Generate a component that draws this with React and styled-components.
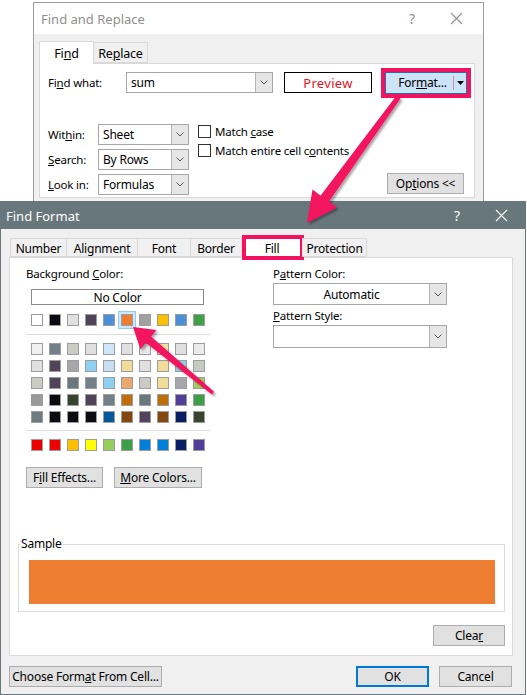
import React from 'react';
import styled, { createGlobalStyle, css } from 'styled-components';

const Global = createGlobalStyle`
  *, *::before, *::after { box-sizing: border-box; }
  html, body { margin: 0; padding: 0; background: #fff; }
  body {
    font-family: "Noto Sans", "Liberation Sans", sans-serif;
    font-size: 11.5px;
    letter-spacing: -0.2px;
    color: #000;
  }
`;

const PINK = '#f3125f';

const Desktop = styled.div`
  position: relative;
  width: 527px;
  height: 695px;
  overflow: hidden;
  background: #fff;
`;

/* ---------- windows ---------- */
const Window = styled.div`
  position: absolute;
  left: ${p => p.$x}px;
  top: ${p => p.$y}px;
  width: ${p => p.$w}px;
  height: ${p => p.$h}px;
  background: #f0f0f0;
  border: 1px solid ${p => p.$border};
  display: flex;
  flex-direction: column;
`;

const TitleBar = styled.div`
  height: ${p => p.$h}px;
  flex: none;
  display: flex;
  align-items: center;
  padding-left: ${p => p.$pad}px;
  background: ${p => (p.$active ? '#68777b' : '#fff')};
  color: ${p => (p.$active ? '#fff' : '#8f8f8f')};
  font-size: 13px;
  letter-spacing: 0;
`;

const TitleText = styled.div`
  flex: 1;
`;

const TitleBtn = styled.div`
  width: ${p => p.$w}px;
  display: flex;
  justify-content: center;
  align-items: center;
  font-size: 14px;
`;

const CloseIcon = ({ color }) => (
  <svg width="13" height="13" viewBox="0 0 13 13">
    <path d="M1 1 L12 12 M12 1 L1 12" stroke={color} strokeWidth="1.1" fill="none" />
  </svg>
);

/* ---------- tabs ---------- */
const TabStrip = styled.div`
  display: flex;
  align-items: flex-end;
  height: ${p => p.$h}px;
  padding-left: ${p => p.$indent || 0}px;
  position: relative;
  z-index: 1;
`;

const Tab = styled.div`
  position: relative;
  width: ${p => p.$w}px;
  height: ${p => (p.$active ? p.$h + 2 : p.$h)}px;
  margin-bottom: ${p => (p.$active ? -1 : 0)}px;
  display: flex;
  align-items: center;
  justify-content: center;
  background: ${p => (p.$active ? '#fff' : '#f0f0f0')};
  border: 1px solid #d9d9d9;
  border-bottom: ${p => (p.$active ? 'none' : '1px solid #d9d9d9')};
  margin-left: -1px;
  font-size: ${p => p.$fs || 12}px;
  padding-top: ${p => (p.$active ? 0 : 1)}px;
`;

const TabHighlight = styled.div`
  position: absolute;
  left: 0px;
  top: -3px;
  right: -2px;
  bottom: -2px;
  border: 4px solid ${PINK};
  pointer-events: none;
`;

const Panel = styled.div`
  background: #fff;
  border: 1px solid #d9d9d9;
  width: ${p => p.$w}px;
  height: ${p => p.$h}px;
  display: flex;
  flex-direction: column;
`;

/* ---------- controls ---------- */
const U = styled.span`
  text-decoration: underline;
  text-underline-offset: 1px;
`;

const Label = styled.div`
  width: ${p => (p.$w ? `${p.$w}px` : 'auto')};
  line-height: 16px;
  white-space: nowrap;
`;

const ComboBox = styled.div`
  width: ${p => p.$w}px;
  height: ${p => p.$h || 21}px;
  display: flex;
  background: #fff;
  border: 1px solid #a6a6a6;
`;

const ComboText = styled.div`
  flex: 1;
  display: flex;
  align-items: center;
  justify-content: ${p => (p.$center ? 'center' : 'flex-start')};
  padding-left: ${p => (p.$center ? 0 : 4)}px;
  font-size: 12px;
`;

const ComboDrop = styled.div`
  width: 17px;
  display: flex;
  align-items: center;
  justify-content: center;
  background: #e6e6e6;
  border-left: 1px solid #b4b4b4;
`;

const Chevron = () => (
  <svg width="8" height="5" viewBox="0 0 8 5">
    <polyline points="0.5,0.5 4,4 7.5,0.5" stroke="#555" strokeWidth="1" fill="none" />
  </svg>
);

const Combo = ({ w, h, center, children }) => (
  <ComboBox $w={w} $h={h}>
    <ComboText $center={center}>{children}</ComboText>
    <ComboDrop>
      <Chevron />
    </ComboDrop>
  </ComboBox>
);

const Button = styled.div`
  width: ${p => p.$w}px;
  height: ${p => p.$h || 21}px;
  display: flex;
  align-items: center;
  justify-content: center;
  background: #e1e1e1;
  border: ${p => (p.$default ? '2px solid #0078d7' : '1px solid #adadad')};
  font-size: 12px;
  white-space: nowrap;
`;

const PreviewBox = styled.div`
  width: 88px;
  height: 21px;
  border: 1px solid #000;
  display: flex;
  align-items: center;
  justify-content: center;
  color: #e8121e;
  font-size: 13px;
  letter-spacing: 0.3px;
`;

const FormatFrame = styled.div`
  width: 90px;
  height: 30px;
  border: 4px solid ${PINK};
  display: flex;
`;

const FormatBtn = styled.div`
  flex: 1;
  display: flex;
  align-items: center;
  background: #cce4f7;
  border: 1px solid #2a6aa8;
  font-size: 12px;
`;

const FormatLabel = styled.div`
  flex: 1;
  text-align: center;
  padding-left: 6px;
`;

const FormatSplit = styled.div`
  width: 1px;
  height: 14px;
  background: #d98aa0;
`;

const FormatArrow = styled.div`
  width: 12px;
  display: flex;
  justify-content: center;
`;

const CheckRow = styled.div`
  display: flex;
  align-items: center;
  gap: 4px;
  height: 14px;
`;

const CheckBox = styled.div`
  width: 13px;
  height: 13px;
  border: 1px solid #333;
  background: #fff;
`;

/* ---------- back dialog layout ---------- */
const BackBody = styled.div`
  padding: 7px 0 0 5px;
`;

const BackPanelInner = styled.div`
  padding: 8px 0 0 8px;
  display: flex;
  flex-direction: column;
`;

const FindRow = styled.div`
  display: flex;
  align-items: center;
  height: 21px;
`;

const Gap = styled.div`
  width: ${p => p.$w}px;
  flex: none;
`;

const LowerSection = styled.div`
  display: flex;
  margin-top: 31px;
`;

const SelectGrid = styled.div`
  display: grid;
  grid-template-columns: 50px 91px;
  row-gap: 4px;
  align-items: center;
`;

const CheckColumn = styled.div`
  flex: 1;
  margin-left: 9px;
  margin-right: 10px;
  display: flex;
  flex-direction: column;
  gap: 5px;
`;

const OptionsWrap = styled.div`
  display: flex;
  justify-content: flex-end;
  margin-top: 11px;
`;

/* ---------- front dialog layout ---------- */
const FrontBody = styled.div`
  flex: 1;
  padding: 8px 13px 0 8px;
  display: flex;
  flex-direction: column;
`;

const FillPanelInner = styled.div`
  flex: 1;
  padding: 8px 7px 9px 8px;
  display: flex;
  flex-direction: column;
`;

const Columns = styled.div`
  display: grid;
  grid-template-columns: 247px 174px;
  padding-left: 8px;
`;

const Col = styled.div`
  display: flex;
  flex-direction: column;
`;

const NoColor = styled.div`
  width: 173px;
  height: 16px;
  margin: 7px 0 0 5px;
  border: 1px solid #8a8a8a;
  display: flex;
  align-items: center;
  justify-content: center;
  font-size: 12px;
`;

const SwatchGrid = styled.div`
  display: grid;
  grid-template-columns: repeat(10, 12px);
  column-gap: 6px;
  row-gap: 5px;
  margin-left: 5px;
  margin-top: ${p => p.$mt}px;
`;

const Swatch = styled.div`
  width: 12px;
  height: 12px;
  border: 1px solid #9d9d9d;
  background: ${p => p.$c};
  ${p =>
    p.$selected &&
    css`
      box-shadow: 0 0 0 2px #cde8fa, 0 0 0 3px #8fcdf1;
    `}
`;

const Separator = styled.div`
  width: 184px;
  height: 1px;
  background: #dcdcdc;
  margin-top: ${p => p.$mt}px;
`;

const ButtonRow = styled.div`
  display: flex;
  gap: 11px;
  margin-top: 16px;
`;

const RightLabel = styled(Label)`
  margin-top: ${p => p.$mt || 0}px;
`;

const RightCombo = styled.div`
  margin-top: ${p => p.$mt || 0}px;
`;

const SampleGroup = styled.fieldset`
  margin: auto 0 0 0;
  padding: 0 9px 7px 10px;
  border: 1px solid #dcdcdc;
  min-width: 0;
`;

const SampleLegend = styled.legend`
  padding: 0 1px;
  margin-left: -9px;
  line-height: 14px;
  font-size: 12px;
`;

const SampleFill = styled.div`
  height: 44px;
  margin-top: 9px;
  background: #ed7d31;
`;

const ClearRow = styled.div`
  display: flex;
  justify-content: flex-end;
  margin-top: 13px;
`;

const BottomRow = styled.div`
  display: flex;
  align-items: center;
  margin-top: 10px;
`;

const Spacer = styled.div`
  flex: 1;
`;

/* ---------- arrows overlay ---------- */
const Overlay = styled.svg`
  position: absolute;
  left: 0;
  top: 0;
  pointer-events: none;
`;

const themeRow = ['#ffffff', '#0b0b10', '#e0e0e0', '#4f4459', '#4a8fd8', '#ed7d31', '#a0a0a0', '#ffc000', '#4a8fd8', '#3f9f45'];
const grid = [
  ['#f0f0f0', '#738089', '#c9cbc4', '#e0e0e0', '#cfe6f8', '#e0e0e0', '#e8e8e8', '#f2e2a2', '#e0e0e0', '#ebebeb'],
  ['#e0e0e0', '#4f4459', '#a7a7ab', '#8dd0f2', '#c8def3', '#f1dc9a', '#e0e0e0', '#f1dc9a', '#8dd0f2', '#c8cac4'],
  ['#c9cbc4', '#4f4459', '#6a777c', '#738089', '#8dd0f2', '#eba86e', '#c9cbc4', '#f1dc9a', '#a7a7ab', '#a0d060'],
  ['#9a9a9a', '#0b0b10', '#3b4230', '#4f4459', '#738089', '#c06d0c', '#6a777c', '#c06d0c', '#4f3f99', '#3c9e45'],
  ['#6e7b80', '#0b0b10', '#0b0b10', '#0b0b10', '#05589a', '#854710', '#4f4459', '#854710', '#0a1f62', '#3b4230'],
];
const standardRow = ['#ec0000', '#ec0000', '#ffc000', '#ffff00', '#97cd5b', '#3c9e45', '#0080d8', '#0080d8', '#0a1f62', '#4f3f99'];

const frontTabs = [
  { label: 'Number', w: 57 },
  { label: 'Alignment', w: 72 },
  { label: 'Font', w: 54 },
  { label: 'Border', w: 52 },
  { label: 'Fill', w: 62, active: true },
  { label: 'Protection', w: 65 },
];

export default function App() {
  return (
    <Desktop>
      <Global />

      {/* Find and Replace (background window) */}
      <Window $x={33} $y={2} $w={451} $h={240} $border="#9c9c9c">
        <TitleBar $h={31} $pad={7}>
          <TitleText>Find and Replace</TitleText>
          <TitleBtn $w={36}>?</TitleBtn>
          <TitleBtn $w={52}>
            <CloseIcon color="#8f8f8f" />
          </TitleBtn>
          <Gap $w={1} />
        </TitleBar>
        <BackBody>
          <TabStrip $h={22} $indent={1}>
            <Tab $w={55} $h={21} $active $fs={12.5}>
              Fi<U>n</U>d
            </Tab>
            <Tab $w={55} $h={21} $fs={12.5}>
              Re<U>p</U>lace
            </Tab>
          </TabStrip>
          <Panel $w={436} $h={135}>
            <BackPanelInner>
              <FindRow>
                <Label $w={78}>
                  Fi<U>n</U>d what:
                </Label>
                <Combo w={147}>sum</Combo>
                <Gap $w={11} />
                <PreviewBox>Preview</PreviewBox>
                <Gap $w={9} />
                <FormatFrame>
                  <FormatBtn>
                    <FormatLabel>
                      For<U>m</U>at...
                    </FormatLabel>
                    <FormatSplit />
                    <FormatArrow>
                      <svg width="7" height="4" viewBox="0 0 7 4">
                        <polygon points="0,0 7,0 3.5,4" fill="#000" />
                      </svg>
                    </FormatArrow>
                  </FormatBtn>
                </FormatFrame>
              </FindRow>
              <LowerSection>
                <SelectGrid>
                  <Label>
                    Wit<U>h</U>in:
                  </Label>
                  <Combo w={91}>Sheet</Combo>
                  <Label>
                    <U>S</U>earch:
                  </Label>
                  <Combo w={91}>By Rows</Combo>
                  <Label>
                    <U>L</U>ook in:
                  </Label>
                  <Combo w={91}>Formulas</Combo>
                </SelectGrid>
                <CheckColumn>
                  <CheckRow>
                    <CheckBox />
                    <span>
                      Match <U>c</U>ase
                    </span>
                  </CheckRow>
                  <CheckRow>
                    <CheckBox />
                    <span>
                      Match entire cell c<U>o</U>ntents
                    </span>
                  </CheckRow>
                  <OptionsWrap>
                    <Button $w={77}>
                      Op<U>t</U>ions &lt;&lt;
                    </Button>
                  </OptionsWrap>
                </CheckColumn>
              </LowerSection>
            </BackPanelInner>
          </Panel>
        </BackBody>
      </Window>

      {/* Find Format (front window) */}
      <Window $x={0} $y={201} $w={526} $h={494} $border="#68777b">
        <TitleBar $h={27} $pad={5} $active>
          <TitleText>Find Format</TitleText>
          <TitleBtn $w={40}>?</TitleBtn>
          <TitleBtn $w={48}>
            <CloseIcon color="#ffffff" />
          </TitleBtn>
        </TitleBar>
        <FrontBody>
          <TabStrip $h={20} $indent={2}>
            {frontTabs.map(t => (
              <Tab key={t.label} $w={t.w} $h={19} $active={t.active} $fs={12}>
                {t.label}
                {t.active && <TabHighlight />}
              </Tab>
            ))}
          </TabStrip>
          <Panel $w={504} $h={399}>
            <FillPanelInner>
              <Columns>
                <Col>
                  <Label>
                    Background <U>C</U>olor:
                  </Label>
                  <NoColor>No Color</NoColor>
                  <SwatchGrid $mt={9}>
                    {themeRow.map((c, i) => (
                      <Swatch key={i} $c={c} $selected={i === 5} />
                    ))}
                  </SwatchGrid>
                  <Separator $mt={8} />
                  <SwatchGrid $mt={8}>
                    {grid.flat().map((c, i) => (
                      <Swatch key={i} $c={c} />
                    ))}
                  </SwatchGrid>
                  <Separator $mt={7} />
                  <SwatchGrid $mt={8}>
                    {standardRow.map((c, i) => (
                      <Swatch key={i} $c={c} />
                    ))}
                  </SwatchGrid>
                  <ButtonRow>
                    <Button $w={77}>
                      F<U>i</U>ll Effects...
                    </Button>
                    <Button $w={88}>
                      <U>M</U>ore Colors...
                    </Button>
                  </ButtonRow>
                </Col>
                <Col>
                  <RightLabel>
                    P<U>a</U>ttern Color:
                  </RightLabel>
                  <RightCombo $mt={1}>
                    <Combo w={174} h={22} center>
                      Automatic
                    </Combo>
                  </RightCombo>
                  <RightLabel $mt={3}>
                    <U>P</U>attern Style:
                  </RightLabel>
                  <RightCombo $mt={1}>
                    <Combo w={174} h={23} />
                  </RightCombo>
                </Col>
              </Columns>
              <SampleGroup>
                <SampleLegend>Sample</SampleLegend>
                <SampleFill />
              </SampleGroup>
              <ClearRow>
                <Button $w={72}>
                  Clea<U>r</U>
                </Button>
              </ClearRow>
            </FillPanelInner>
          </Panel>
          <BottomRow>
            <Button $w={153}>
              Choose Form<U>a</U>t From Cell...
            </Button>
            <Spacer />
            <Button $w={73} $default>
              OK
            </Button>
            <Gap $w={10} />
            <Button $w={73}>Cancel</Button>
          </BottomRow>
        </FrontBody>
      </Window>

      {/* annotation arrows */}
      <Overlay width="527" height="695" viewBox="0 0 527 695">
        <defs>
          <filter id="shadow" x="-20%" y="-20%" width="140%" height="140%">
            <feDropShadow dx="2" dy="2" stdDeviation="1.2" floodColor="#000" floodOpacity="0.35" />
          </filter>
        </defs>
        <polygon
          filter="url(#shadow)"
          fill={PINK}
          points="400.5,98.5 329,201.5 337,207.5 307,223 312.5,189.5 320.5,195.7 396.5,95.5"
        />
        <polygon
          filter="url(#shadow)"
          fill={PINK}
          points="133,327 156.5,330 151,336.6 214,391.8 212,394.5 145.9,342.8 140.5,349.5"
        />
      </Overlay>
    </Desktop>
  );
}
